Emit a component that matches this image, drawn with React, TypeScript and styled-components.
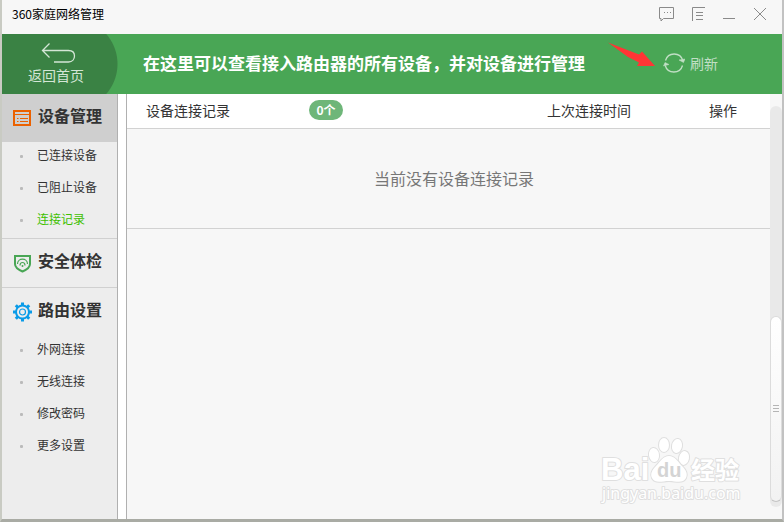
import React from "react";
import styled, { createGlobalStyle } from "styled-components";

const GlobalStyle = createGlobalStyle`
  * { box-sizing: border-box; }
  body {
    margin: 0;
    background: #c9cbc3;
    font-family: "Noto Sans CJK SC", "Liberation Sans", sans-serif;
    font-size: 12px;
    color: #333;
  }
  button { font-family: inherit; border: 0; padding: 0; background: none; cursor: pointer; }
  h1, h2, p, ul { margin: 0; padding: 0; }
`;

const Window = styled.div`
  display: flex;
  flex-direction: column;
  min-height: 100vh;
  border: solid #c9cbc3;
  border-width: 0 2px 3px;
  border-right-color: #c2c2c2;
  border-bottom-color: #a9aba4;
  background: #f7f7f7;
`;

const TitleBar = styled.header`
  display: flex;
  align-items: center;
  justify-content: space-between;
  height: 34px;
  padding: 0 13px 4px 10px;
`;

const WindowTitle = styled.h1`
  font-size: 12px;
  font-weight: 400;
  line-height: 18px;
  padding-bottom: 2px;
  color: #000;
`;

const WindowControls = styled.div`
  display: flex;
  gap: 15px;
`;

const ControlButton = styled.button`
  display: flex;
  width: 16px;
  height: 16px;
  color: #8a8a8a;
`;

const Banner = styled.div`
  display: flex;
  align-items: center;
  height: 60px;
  background: #49a655;
`;

const BackButton = styled.button`
  display: flex;
  flex-direction: column;
  align-items: center;
  flex: none;
  width: 116px;
  height: 60px;
  padding: 8px 8px 0 0;
  font-size: 14px;
  line-height: 20px;
  color: #d4e6d6;
  background:
    linear-gradient(#3a8244, #3a8244) 0 0 / 70px 100% no-repeat,
    radial-gradient(circle at 70px 30px, #3a8244 45px, #49a655 46px);
  svg { margin: 0 0 2px 6px; }
`;

const BannerText = styled.p`
  flex: 1;
  padding: 0 0 2px 25px;
  font-size: 17px;
  font-weight: 700;
  line-height: 24px;
  color: #fff;
  white-space: nowrap;
`;

const RefreshArea = styled.div`
  position: relative;
  margin-right: 64px;
`;

const PointerArrow = styled.svg`
  position: absolute;
  right: 100%;
  top: -10px;
  margin-right: 7px;
`;

const RefreshButton = styled.button`
  display: flex;
  align-items: center;
  gap: 5px;
  padding-bottom: 2px;
  font-size: 14px;
  line-height: 20px;
  color: #c1dfc5;
`;

const Body = styled.div`
  display: flex;
  flex: 1;
`;

const Sidebar = styled.nav`
  flex: none;
  width: 116px;
  background: #ededed;
  border-right: 1px solid #b0b0b0;
`;

const Section = styled.section`
  & + & { border-top: 1px solid #d0d0d0; }
`;

const SectionButton = styled.button<{ $active?: boolean }>`
  display: flex;
  align-items: center;
  gap: 5px;
  width: 100%;
  height: 48px;
  padding-left: 10px;
  font-size: 16px;
  font-weight: 700;
  color: #333;
  background: ${(p) => (p.$active ? "#cfcfcf" : "transparent")};
`;

const SectionLabel = styled.span`
  line-height: 24px;
  padding-bottom: 6px;
`;

const ItemList = styled.ul`
  list-style: none;
`;

const Item = styled.li`
  display: flex;
  align-items: center;
  height: 28px;
  margin-bottom: 4px;
  padding-left: 18px;
  &::before {
    content: "";
    width: 3px;
    height: 3px;
    margin-right: 14px;
    border-radius: 1px;
    background: #bbb;
  }
`;

const ItemLink = styled.a<{ $active?: boolean }>`
  line-height: 18px;
  padding-bottom: 2px;
  text-decoration: none;
  color: ${(p) => (p.$active ? "#40c000" : "#333")};
`;

const Content = styled.main`
  position: relative;
  flex: 1;
  margin-left: 8px;
  border-left: 1px solid #b0b0b0;
  box-shadow: -8px 0 0 #fff;
`;

const RecordTable = styled.table`
  width: 100%;
  border-collapse: separate;
  border-spacing: 0;
  table-layout: fixed;
`;

const HeadCell = styled.th<{ $width?: number }>`
  width: ${(p) => (p.$width ? `${p.$width}px` : "auto")};
  height: 35px;
  padding: 0 0 2px;
  background: #fff;
  border-bottom: 1px solid #d2d2d2;
  font-size: 14px;
  font-weight: 400;
  line-height: 20px;
  text-align: left;
`;

const HeadTitle = styled.div`
  display: flex;
  align-items: center;
  gap: 79px;
  padding-left: 19px;
`;

const CountBadge = styled.span`
  width: 34px;
  border-radius: 10px;
  background: #6eb679;
  color: #fff;
  font-size: 12px;
  font-weight: 700;
  line-height: 20px;
  text-align: center;
`;

const EmptyCell = styled.td`
  height: 100px;
  padding: 0 0 2px 11px;
  border-bottom: 1px solid #d2d2d2;
  font-size: 16px;
  line-height: 24px;
  color: #777;
  text-align: center;
`;

const ScrollColumn = styled.div`
  display: flex;
  flex-direction: column;
  flex: none;
  width: 12px;
  padding: 12px 0;
`;

const Track = styled.div`
  display: flex;
  flex-direction: column;
  justify-content: flex-end;
  flex: 1;
  padding-bottom: 5px;
  border-radius: 6px;
  background: #e9e9e9;
`;

const Thumb = styled.div`
  display: flex;
  flex-direction: column;
  align-items: center;
  justify-content: center;
  gap: 2px;
  height: 47%;
  border: 1px solid #dcdcdc;
  border-bottom-color: #c4c4c4;
  border-radius: 6px;
  background: linear-gradient(#fff, #f2f2f2);
`;

const Grip = styled.span`
  width: 6px;
  height: 1px;
  background: #b5b5b5;
`;

const Watermark = styled.svg`
  position: absolute;
  right: 26px;
  bottom: 12px;
`;

const controls = [
  { label: "反馈", icon: <path d="M-.5 .5h14v11h-10l-2.500 2.500v-2.500h-1.500zM4 5.500h1M7 5.500h1M10 5.500h1" /> },
  { label: "菜单", icon: <path d="M1.500 14V.5H14M5 5.500h7M5 8.500h7M5 12.500h7" /> },
  { label: "最小化", icon: <path d="M1 11.500h12" /> },
  { label: "关闭", icon: <path d="M1 1l12 12M13 1L1 13" /> },
];

const ListIcon = () => (
  <svg width="21" height="20" viewBox="0 0 21 20" fill="none" stroke="#eb6100">
    <rect x="2" y="3" width="16" height="14" strokeWidth="2" />
    <path d="M3 6.500h14M5 10.500h1.500M8 10.500h8M5 13.500h1.500M8 13.500h8" strokeWidth="1" />
  </svg>
);

const ShieldIcon = () => (
  <svg width="21" height="20" viewBox="0 0 21 20" fill="none" stroke="#49a655">
    <path d="M3 3h15v8c0 4-4 6-7.500 7.500C7 17 3 15 3 11z" strokeWidth="2" />
    <path d="M5.500 11c0-6.500 10-6.500 10 0M8 12.500c0-4 5-4 5 0" strokeWidth="1.200" />
    <circle cx="10.500" cy="13" r="1" fill="#49a655" stroke="none" />
  </svg>
);

const GearIcon = () => (
  <svg width="21" height="20" viewBox="0 0 21 20" fill="none" stroke="#0a9be8">
    <circle cx="10.500" cy="10" r="6.500" strokeWidth="2" />
    <circle cx="10.500" cy="10" r="3" strokeWidth="1.200" />
    <path
      d="M10.500 .5v3M10.500 16.500v3M1 10h3M17 10h3M3.800 3.300l2 2M15.200 14.700l2 2M3.800 16.700l2-2M15.200 5.300l2-2"
      strokeWidth="3"
    />
  </svg>
);

const sections = [
  { title: "设备管理", icon: <ListIcon />, active: true, items: ["已连接设备", "已阻止设备", "连接记录"] },
  { title: "安全体检", icon: <ShieldIcon />, items: [] },
  { title: "路由设置", icon: <GearIcon />, items: ["外网连接", "无线连接", "修改密码", "更多设置"] },
];

const paw = (
  <>
    <ellipse cx="54" cy="18" rx="5" ry="7" transform="rotate(-8 54 18)" />
    <ellipse cx="64" cy="8" rx="5" ry="7" />
    <ellipse cx="77" cy="9" rx="5" ry="7" transform="rotate(10 77 9)" />
    <ellipse cx="84" cy="21" rx="5" ry="7" transform="rotate(12 84 21)" />
    <path d="M69 19c6 0 9 6 13 10s6 8 4 12c-3 6-10 3-17 3s-14 3-17-3c-2-4 0-8 4-12s7-10 13-10z" />
  </>
);

export default function App() {
  return (
    <>
      <GlobalStyle />
      <Window>
        <TitleBar>
          <WindowTitle>360家庭网络管理</WindowTitle>
          <WindowControls>
            {controls.map((c) => (
              <ControlButton key={c.label} aria-label={c.label}>
                <svg width="16" height="16" viewBox="0 0 16 16" fill="none" stroke="currentColor" overflow="visible">
                  {c.icon}
                </svg>
              </ControlButton>
            ))}
          </WindowControls>
        </TitleBar>

        <Banner>
          <BackButton>
            <svg width="36" height="21" viewBox="0 0 36 21" fill="none" stroke="currentColor" strokeWidth="1.300">
              <path d="M8.500 1.500L1.500 8.500l7 7M1.500 8.500h26c4 0 6 2.500 6 5.500s-2 6-6 6H13" />
            </svg>
            返回首页
          </BackButton>
          <BannerText>在这里可以查看接入路由器的所有设备，并对设备进行管理</BannerText>
          <RefreshArea>
            <PointerArrow width="50" height="26" viewBox="0 0 50 26" aria-hidden="true">
              <path d="M2 .5L33 12.500l3-3 13 14.500H31l2-3.500L22 15z" fill="#ff3535" />
            </PointerArrow>
            <RefreshButton>
              <svg width="22" height="22" viewBox="0 0 22 22" fill="none" stroke="currentColor" strokeWidth="1.300">
                <path d="M2.500 8.500A9 9 0 0 1 19.800 8.500M19.500 13.500A9 9 0 0 1 2.200 13.500" />
                <path d="M16 8l6-1-1.500 3.500zM6 12.500L.5 14 2 10.500z" fill="currentColor" strokeWidth=".5" />
              </svg>
              刷新
            </RefreshButton>
          </RefreshArea>
        </Banner>

        <Body>
          <Sidebar>
            {sections.map((s) => (
              <Section key={s.title}>
                <SectionButton $active={s.active}>
                  {s.icon}
                  <SectionLabel>{s.title}</SectionLabel>
                </SectionButton>
                {s.items.length > 0 && (
                  <ItemList>
                    {s.items.map((item) => (
                      <Item key={item}>
                        <ItemLink href="#" $active={item === "连接记录"}>
                          {item}
                        </ItemLink>
                      </Item>
                    ))}
                  </ItemList>
                )}
              </Section>
            ))}
          </Sidebar>

          <Content>
            <RecordTable>
              <thead>
                <tr>
                  <HeadCell scope="col">
                    <HeadTitle>
                      设备连接记录
                      <CountBadge>0个</CountBadge>
                    </HeadTitle>
                  </HeadCell>
                  <HeadCell scope="col" $width={162}>上次连接时间</HeadCell>
                  <HeadCell scope="col" $width={61}>操作</HeadCell>
                </tr>
              </thead>
              <tbody>
                <tr>
                  <EmptyCell colSpan={3}>当前没有设备连接记录</EmptyCell>
                </tr>
              </tbody>
            </RecordTable>
            <Watermark
              width="144"
              height="70"
              viewBox="0 0 144 70"
              fill="#fff"
              stroke="#dfdfdf"
              strokeWidth="2"
              strokeLinejoin="round"
              paintOrder="stroke"
              fontFamily="'Liberation Sans', sans-serif"
            >
              <text x="1" y="43" fontSize="31" fontWeight="700">Bai</text>
              {paw}
              <text x="57" y="40" fontSize="20" fontWeight="700" fill="#d4d4d4" stroke="none">du</text>
              <text x="91" y="42" fontSize="24" fontWeight="700" fontFamily="'Noto Sans CJK SC', sans-serif">经验</text>
              <text x="2" y="62" fontSize="16" fontFamily="'Noto Sans', sans-serif">jingyan.baidu.com</text>
            </Watermark>
          </Content>

          <ScrollColumn aria-hidden="true">
            <Track>
              <Thumb>
                <Grip />
                <Grip />
                <Grip />
              </Thumb>
            </Track>
          </ScrollColumn>
        </Body>
      </Window>
    </>
  );
}
